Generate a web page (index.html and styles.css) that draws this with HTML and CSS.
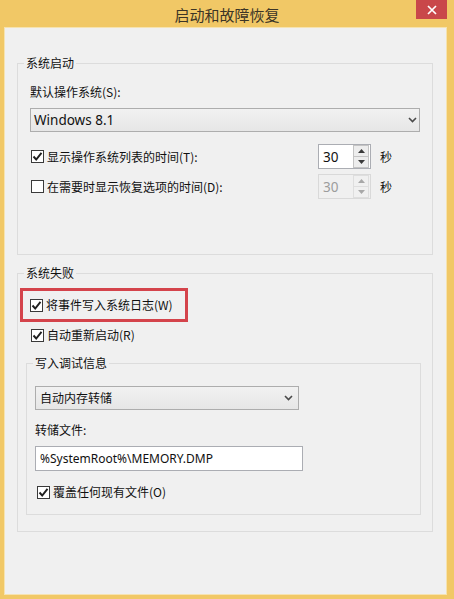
FILE: index.html
```html
<!DOCTYPE html>
<html lang="zh-CN">
<head>
<meta charset="utf-8">
<title>启动和故障恢复</title>
<link rel="stylesheet" href="styles.css">
</head>
<body>
<div class="window">
  <div class="titlebar">
    <span class="title">启动和故障恢复</span>
    <div class="close">
      <svg width="10" height="10" viewBox="0 0 10 10"><path d="M1 1 L9 9 M9 1 L1 9" stroke="#fff" stroke-width="1.7" fill="none"/></svg>
    </div>
  </div>
  <div class="client">
    <fieldset class="group outer first">
      <legend>系统启动</legend>
      <div class="label lbl-os">默认操作系统(S):</div>
      <div class="combo combo-os">
        <span>Windows 8.1</span>
        <svg class="chev" width="9" height="6" viewBox="0 0 9 6"><path d="M1 1 L4.5 4.5 L8 1" stroke="#4a4a4a" stroke-width="1.6" fill="none"/></svg>
      </div>
      <div class="spin-row row-list">
        <div class="check">
          <span class="box"><svg width="11" height="11" viewBox="0 0 11 11"><path d="M1.5 5.5 L4.2 8.5 L9.5 1.8" stroke="#1e1e1e" stroke-width="1.9" fill="none"/></svg></span>
          <span class="text">显示操作系统列表的时间(T):</span>
        </div>
        <div class="spin">
          <span class="val">30</span>
          <div class="btns">
            <span class="btn"><svg width="7" height="4" viewBox="0 0 7 4"><path d="M0 4 L3.5 0 L7 4 Z" fill="#3a3a3a"/></svg></span>
            <span class="btn"><svg width="7" height="4" viewBox="0 0 7 4"><path d="M0 0 L3.5 4 L7 0 Z" fill="#3a3a3a"/></svg></span>
          </div>
        </div>
        <span class="unit">秒</span>
      </div>
      <div class="spin-row row-recover">
        <div class="check">
          <span class="box"></span>
          <span class="text">在需要时显示恢复选项的时间(D):</span>
        </div>
        <div class="spin disabled">
          <span class="val">30</span>
          <div class="btns">
            <span class="btn"><svg width="7" height="4" viewBox="0 0 7 4"><path d="M0 4 L3.5 0 L7 4 Z" fill="#a8a8a8"/></svg></span>
            <span class="btn"><svg width="7" height="4" viewBox="0 0 7 4"><path d="M0 0 L3.5 4 L7 0 Z" fill="#a8a8a8"/></svg></span>
          </div>
        </div>
        <span class="unit">秒</span>
      </div>
    </fieldset>

    <fieldset class="group outer second">
      <legend>系统失败</legend>
      <div class="highlight">
        <div class="check">
          <span class="box"><svg width="11" height="11" viewBox="0 0 11 11"><path d="M1.5 5.5 L4.2 8.5 L9.5 1.8" stroke="#1e1e1e" stroke-width="1.9" fill="none"/></svg></span>
          <span class="text">将事件写入系统日志(W)</span>
        </div>
      </div>
      <div class="check row-restart">
        <span class="box"><svg width="11" height="11" viewBox="0 0 11 11"><path d="M1.5 5.5 L4.2 8.5 L9.5 1.8" stroke="#1e1e1e" stroke-width="1.9" fill="none"/></svg></span>
        <span class="text">自动重新启动(R)</span>
      </div>
      <fieldset class="group inner">
        <legend>写入调试信息</legend>
        <div class="combo combo-dump">
          <span class="cjk">自动内存转储</span>
          <svg class="chev" width="9" height="6" viewBox="0 0 9 6"><path d="M1 1 L4.5 4.5 L8 1" stroke="#4a4a4a" stroke-width="1.6" fill="none"/></svg>
        </div>
        <div class="label lbl-file">转储文件:</div>
        <div class="textbox">%SystemRoot%\MEMORY.DMP</div>
        <div class="check row-overwrite">
          <span class="box"><svg width="11" height="11" viewBox="0 0 11 11"><path d="M1.5 5.5 L4.2 8.5 L9.5 1.8" stroke="#1e1e1e" stroke-width="1.9" fill="none"/></svg></span>
          <span class="text">覆盖任何现有文件(O)</span>
        </div>
      </fieldset>
    </fieldset>
  </div>
</div>
</body>
</html>
```
FILE: styles.css
```css
* { box-sizing: border-box; }

html, body {
  margin: 0;
  padding: 0;
  background: #f1c866;
}

body {
  font-family: "Noto Sans", "Noto Sans CJK SC", sans-serif;
  font-size: 12px;
  line-height: 18px;
  color: #111;
}

.window {
  position: relative;
  width: 454px;
  height: 599px;
  display: flex;
  flex-direction: column;
  background: #f1c866;
}

.titlebar {
  height: 28px;
  flex: 0 0 28px;
  display: flex;
  align-items: center;
  justify-content: center;
}

.title {
  font-family: "Noto Sans CJK SC", sans-serif;
  font-size: 15px;
  color: #3c3526;
  line-height: 20px;
  margin-top: 2px;
}

.close {
  position: absolute;
  top: 0;
  right: 7px;
  width: 31px;
  height: 19px;
  background: #c9474a;
  display: flex;
  align-items: center;
  justify-content: center;
}

.client {
  flex: 1;
  margin: 0 8px 5px 5px;
  background: #f0f0f0;
  padding: 26px 13px 0 12px;
  box-shadow: 0 0 0 1px #f6e3b0;
}

.group {
  margin: 0;
  padding: 0 12px;
  border: 1px solid #dcdcdc;
  min-width: 0;
}

.group legend {
  padding: 0 2px;
  margin-left: -6px;
  line-height: 18px;
  font-size: 12px;
  font-family: "Noto Sans CJK SC", sans-serif;
}

.first {
  padding-bottom: 55px;
}

.second {
  margin-top: 9px;
  padding-bottom: 16px;
}

.inner {
  margin: 10px -1px 0 -4px;
  padding: 0 8px 13px 8px;
}

.inner legend {
  margin-left: -2px;
}

.label {
  height: 18px;
  font-size: 12px;
  font-family: "Noto Sans CJK SC", sans-serif;
}

.lbl-os { margin-top: 11px; }
.lbl-file { margin-top: 11px; }

.combo {
  height: 24px;
  border: 1px solid #adadad;
  background: linear-gradient(#f1f1f1, #e6e6e6);
  display: flex;
  align-items: center;
  justify-content: space-between;
  padding: 0 4px 0 3px;
}

.combo span {
  font-family: "Noto Sans", "Noto Sans CJK SC", sans-serif;
}

.combo .cjk {
  font-family: "Noto Sans CJK SC", sans-serif;
  font-size: 12px;
}

.combo-os {
  margin-top: 7px;
  padding-left: 3px;
  padding-right: 2px;
}

.combo-os span { font-size: 13.5px; }

.combo-dump {
  margin-top: 14px;
  width: 264px;
  padding-left: 4px;
  padding-right: 5px;
}

.chev { display: block; }

.spin-row {
  display: flex;
  align-items: center;
  height: 25px;
}

.row-list { margin-top: 12px; }
.row-recover { margin-top: 5px; }

.spin-row .check {
  flex: 0 0 288px;
}

.check {
  display: flex;
  align-items: center;
  height: 18px;
}

.check .box {
  width: 13px;
  height: 13px;
  border: 1px solid #3a3a3a;
  background: #fff;
  display: flex;
  align-items: center;
  justify-content: center;
  flex: 0 0 13px;
  margin-left: 1px;
}

.check .box svg { display: block; }

.check .text {
  margin-left: 3px;
  font-size: 12px;
  font-family: "Noto Sans CJK SC", sans-serif;
  white-space: nowrap;
}

.spin {
  width: 53px;
  height: 25px;
  border: 1px solid #abadb3;
  background: #fff;
  display: flex;
  align-items: stretch;
}

.spin .val {
  flex: 1;
  padding-left: 4px;
  display: flex;
  align-items: center;
  font-size: 13.5px;
  font-family: "Noto Sans", sans-serif;
}

.spin .btns {
  width: 16px;
  margin: 0 1px 0 0;
  display: flex;
  flex-direction: column;
}

.spin .btn {
  flex: 1;
  border: 1px solid #c4c4c4;
  background: #ededed;
  display: flex;
  align-items: center;
  justify-content: center;
}

.spin .btn + .btn { border-top: none; }

.spin.disabled {
  border-color: #d9d9d9;
  background: #f0f0f0;
}

.spin.disabled .val { color: #9c9c9c; }

.spin.disabled .btn {
  border-color: #dedede;
  background: #f0f0f0;
}

.unit {
  margin-left: 9px;
  font-size: 12px;
  font-family: "Noto Sans CJK SC", sans-serif;
}

.highlight {
  margin-top: 6px;
  margin-left: -10px;
  width: 168px;
  height: 34px;
  border: 3px solid #d4434b;
  padding-left: 6px;
  display: flex;
  align-items: center;
}

.row-restart { margin-top: 4px; }

.textbox {
  margin-top: 7px;
  width: 268px;
  height: 25px;
  border: 1px solid #abadb3;
  background: #fff;
  padding-left: 4px;
  display: flex;
  align-items: center;
  font-family: "Noto Sans", sans-serif;
  font-size: 12px;
  white-space: nowrap;
}

.row-overwrite {
  margin-top: 12px;
  padding-left: 1px;
}
```
